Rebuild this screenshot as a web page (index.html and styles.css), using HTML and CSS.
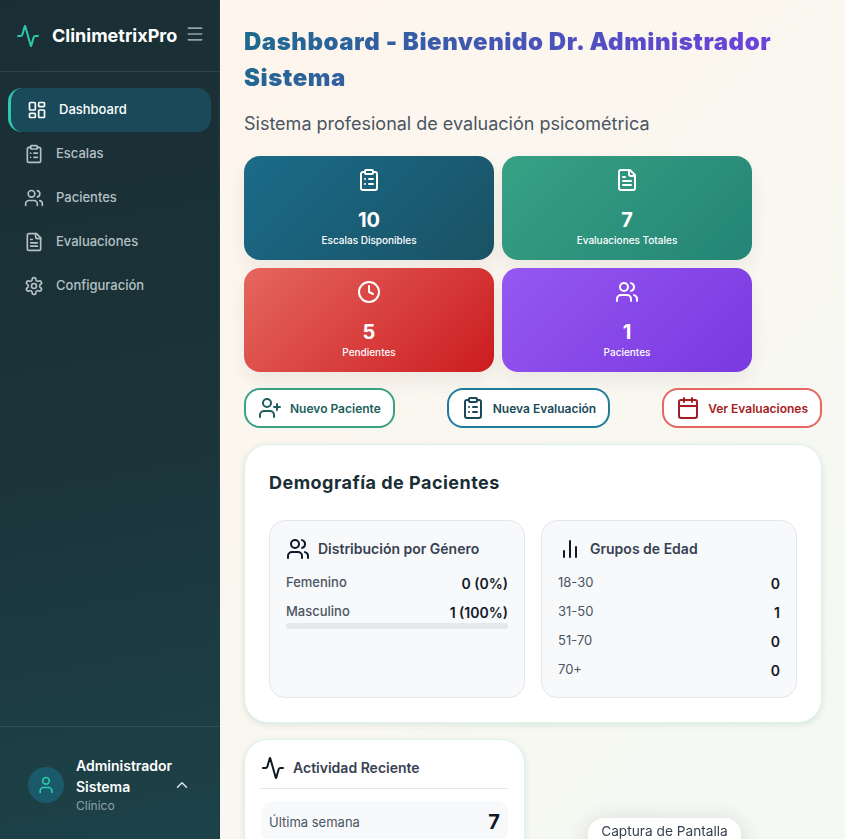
FILE: index.html
```html
<!DOCTYPE html>
<html lang="es">
<head>
	<meta charset="UTF-8">
	<title>ClinimetrixPro</title>
	<link rel="stylesheet" href="styles.css">
</head>
<body>
	<svg class="sprite" xmlns="http://www.w3.org/2000/svg">
		<symbol id="i-activity" viewBox="0 0 24 24"><path d="M22 12h-2.48a2 2 0 0 0-1.93 1.46l-2.35 8.36a.25.25 0 0 1-.48 0L9.24 2.18a.25.25 0 0 0-.48 0l-2.35 8.36A2 2 0 0 1 4.49 12H2"/></symbol>
		<symbol id="i-menu" viewBox="0 0 24 24"><path d="M4 5h16M4 12h16M4 19h16"/></symbol>
		<symbol id="i-dash" viewBox="0 0 24 24"><rect x="3" y="3" width="7" height="9" rx="1"/><rect x="14" y="3" width="7" height="5" rx="1"/><rect x="14" y="12" width="7" height="9" rx="1"/><rect x="3" y="16" width="7" height="5" rx="1"/></symbol>
		<symbol id="i-clipboard" viewBox="0 0 24 24"><rect x="8" y="2" width="8" height="4" rx="1"/><path d="M16 4h2a2 2 0 0 1 2 2v14a2 2 0 0 1-2 2H6a2 2 0 0 1-2-2V6a2 2 0 0 1 2-2h2M12 11h4M12 16h4M8 11h.01M8 16h.01"/></symbol>
		<symbol id="i-users" viewBox="0 0 24 24"><path d="M16 21v-2a4 4 0 0 0-4-4H6a4 4 0 0 0-4 4v2"/><circle cx="9" cy="7" r="4"/><path d="M22 21v-2a4 4 0 0 0-3-3.87M16 3.13a4 4 0 0 1 0 7.75"/></symbol>
		<symbol id="i-file" viewBox="0 0 24 24"><path d="M15 2H6a2 2 0 0 0-2 2v16a2 2 0 0 0 2 2h12a2 2 0 0 0 2-2V7Z"/><path d="M14 2v4a2 2 0 0 0 2 2h4M10 9H8M16 13H8M16 17H8"/></symbol>
		<symbol id="i-gear" viewBox="0 0 24 24"><path d="M12.22 2h-.44a2 2 0 0 0-2 2v.18a2 2 0 0 1-1 1.73l-.43.25a2 2 0 0 1-2 0l-.15-.08a2 2 0 0 0-2.73.73l-.22.38a2 2 0 0 0 .73 2.73l.15.1a2 2 0 0 1 1 1.72v.51a2 2 0 0 1-1 1.74l-.15.09a2 2 0 0 0-.73 2.73l.22.38a2 2 0 0 0 2.73.73l.15-.08a2 2 0 0 1 2 0l.43.25a2 2 0 0 1 1 1.73V20a2 2 0 0 0 2 2h.44a2 2 0 0 0 2-2v-.18a2 2 0 0 1 1-1.73l.43-.25a2 2 0 0 1 2 0l.15.08a2 2 0 0 0 2.73-.73l.22-.39a2 2 0 0 0-.73-2.73l-.15-.08a2 2 0 0 1-1-1.74v-.5a2 2 0 0 1 1-1.74l.15-.09a2 2 0 0 0 .73-2.73l-.22-.38a2 2 0 0 0-2.73-.73l-.15.08a2 2 0 0 1-2 0l-.43-.25a2 2 0 0 1-1-1.73V4a2 2 0 0 0-2-2z"/><circle cx="12" cy="12" r="3"/></symbol>
		<symbol id="i-clock" viewBox="0 0 24 24"><circle cx="12" cy="12" r="10"/><path d="M12 6v6l4 2"/></symbol>
		<symbol id="i-user-plus" viewBox="0 0 24 24"><path d="M16 21v-2a4 4 0 0 0-4-4H6a4 4 0 0 0-4 4v2"/><circle cx="9" cy="7" r="4"/><path d="M19 8v6M22 11h-6"/></symbol>
		<symbol id="i-calendar" viewBox="0 0 24 24"><path d="M8 2v4M16 2v4"/><rect x="3" y="4" width="18" height="18" rx="2"/><path d="M3 10h18"/></symbol>
		<symbol id="i-bars" viewBox="0 0 24 24"><path d="M6 20v-6M12 20V4M18 20v-10"/></symbol>
		<symbol id="i-user" viewBox="0 0 24 24"><path d="M19 21v-2a4 4 0 0 0-4-4H9a4 4 0 0 0-4 4v2"/><circle cx="12" cy="7" r="4"/></symbol>
		<symbol id="i-up" viewBox="0 0 24 24"><path d="m18 15-6-6-6 6"/></symbol>
	</svg>

	<div class="app">
		<aside class="sidebar">
			<div class="brand">
				<svg class="icon brand-logo"><use href="#i-activity"/></svg>
				<span class="brand-name">ClinimetrixPro</span>
				<svg class="icon brand-menu"><use href="#i-menu"/></svg>
			</div>
			<nav class="nav">
				<a class="nav-item active"><svg class="icon"><use href="#i-dash"/></svg>Dashboard</a>
				<a class="nav-item"><svg class="icon"><use href="#i-clipboard"/></svg>Escalas</a>
				<a class="nav-item"><svg class="icon"><use href="#i-users"/></svg>Pacientes</a>
				<a class="nav-item"><svg class="icon"><use href="#i-file"/></svg>Evaluaciones</a>
				<a class="nav-item"><svg class="icon"><use href="#i-gear"/></svg>Configuración</a>
			</nav>
			<div class="account">
				<div class="avatar"><svg class="icon"><use href="#i-user"/></svg></div>
				<div class="account-text">
					<div class="account-name">Administrador Sistema</div>
					<div class="account-role">Clínico</div>
				</div>
				<svg class="icon account-toggle"><use href="#i-up"/></svg>
			</div>
		</aside>

		<main class="main">
			<h1 class="page-title">Dashboard - Bienvenido Dr. Administrador Sistema</h1>
			<p class="page-sub">Sistema profesional de evaluación psicométrica</p>

			<div class="stats">
				<div class="stat stat-blue">
					<svg class="icon"><use href="#i-clipboard"/></svg>
					<div class="stat-num">10</div>
					<div class="stat-label">Escalas Disponibles</div>
				</div>
				<div class="stat stat-green">
					<svg class="icon"><use href="#i-file"/></svg>
					<div class="stat-num">7</div>
					<div class="stat-label">Evaluaciones Totales</div>
				</div>
				<div class="stat stat-red">
					<svg class="icon"><use href="#i-clock"/></svg>
					<div class="stat-num">5</div>
					<div class="stat-label">Pendientes</div>
				</div>
				<div class="stat stat-purple">
					<svg class="icon"><use href="#i-users"/></svg>
					<div class="stat-num">1</div>
					<div class="stat-label">Pacientes</div>
				</div>
			</div>

			<div class="actions">
				<button class="action action-green"><svg class="icon"><use href="#i-user-plus"/></svg>Nuevo Paciente</button>
				<button class="action action-blue"><svg class="icon"><use href="#i-clipboard"/></svg>Nueva Evaluación</button>
				<button class="action action-red"><svg class="icon"><use href="#i-calendar"/></svg>Ver Evaluaciones</button>
			</div>

			<section class="card demo">
				<h2 class="card-title">Demografía de Pacientes</h2>
				<div class="demo-grid">
					<div class="panel">
						<h3 class="panel-title"><svg class="icon"><use href="#i-users"/></svg>Distribución por Género</h3>
						<div class="row"><span>Femenino</span><b>0 (0%)</b></div>
						<div class="row"><span>Masculino</span><b>1 (100%)</b></div>
						<div class="bar"></div>
					</div>
					<div class="panel">
						<h3 class="panel-title"><svg class="icon"><use href="#i-bars"/></svg>Grupos de Edad</h3>
						<div class="row row-age"><span>18-30</span><b>0</b></div>
						<div class="row row-age"><span>31-50</span><b>1</b></div>
						<div class="row row-age"><span>51-70</span><b>0</b></div>
						<div class="row row-age"><span>70+</span><b>0</b></div>
					</div>
				</div>
			</section>

			<section class="card activity">
				<h3 class="activity-title"><svg class="icon"><use href="#i-activity"/></svg>Actividad Reciente</h3>
				<div class="activity-row"><span>Última semana</span><b>7</b></div>
			</section>
		</main>
	</div>

	<div class="capture-pill">Captura de Pantalla</div>
</body>
</html>
```

FILE: styles.css
```css
* {
	box-sizing: border-box;
}
html, body {
	height: 100%;
	margin: 0;
	overflow: hidden;
}
body {
	font-family: Inter, "Liberation Sans", sans-serif;
	color: #1f2937;
}
.sprite {
	display: none;
}
.icon {
	width: 24px;
	height: 24px;
	flex: none;
	fill: none;
	stroke: currentColor;
	stroke-width: 2;
	stroke-linecap: round;
	stroke-linejoin: round;
}
.app {
	display: flex;
	height: 100%;
}

/* sidebar */
.sidebar {
	display: flex;
	flex-direction: column;
	flex: none;
	width: 220px;
	background: linear-gradient(170deg, #1a2e35 0%, #1b3339 50%, #1d4249 100%);
	border-right: 1px solid #1d3a42;
}
.brand {
	display: flex;
	align-items: center;
	height: 72px;
	padding: 0 16px;
	border-bottom: 1px solid rgba(255, 255, 255, 0.1);
}
.brand-logo {
	color: #2dc9ad;
}
.brand-name {
	margin-left: 12px;
	color: #fff;
	font-size: 18px;
	font-weight: 700;
}
.brand-menu {
	width: 20px;
	height: 20px;
	margin-left: 8px;
	margin-top: -4px;
	color: #8fa3a8;
}
.nav {
	flex: 1;
	padding: 16px 8px;
}
.nav-item {
	display: flex;
	align-items: center;
	gap: 12px;
	height: 44px;
	padding: 0 16px 2px;
	border-radius: 14px;
	color: #b4c0c4;
	font-size: 13px;
	font-weight: 500;
}
.nav-item .icon {
	width: 20px;
	height: 20px;
	margin-top: 2px;
}
.nav-item.active {
	width: 203px;
	border-left: 3px solid #2dc9ad;
	background: #1a4a5a;
	color: #fff;
}
.account {
	display: flex;
	align-items: center;
	height: 113px;
	padding: 4px 28px 0;
	border-top: 1px solid rgba(255, 255, 255, 0.1);
}
.avatar {
	display: flex;
	align-items: center;
	justify-content: center;
	flex: none;
	width: 36px;
	height: 36px;
	border-radius: 50%;
	background: #1a5a6b;
	color: #2dc9ad;
}
.avatar .icon {
	width: 20px;
	height: 20px;
}
.account-text {
	width: 100px;
	margin-left: 12px;
}
.account-name {
	color: #fff;
	font-size: 14px;
	font-weight: 600;
	line-height: 21px;
}
.account-role {
	color: #8fa3a8;
	font-size: 12px;
	line-height: 18px;
}
.account-toggle {
	width: 18px;
	height: 18px;
	margin-left: -1px;
	color: #dfe6e8;
}

/* main */
.main {
	flex: 1;
	padding: 24px 23px 0 24px;
	overflow: hidden;
	background: linear-gradient(135deg, #fef5ec 0%, #f4f9f4 100%);
}
.page-title {
	margin: 0 0 14px;
	font-size: 24px;
	font-weight: 900;
	letter-spacing: 0.53px;
	line-height: 36px;
	background: linear-gradient(135deg, #1a6b8a 0%, #7c3aed 100%);
	-webkit-background-clip: text;
	background-clip: text;
	color: transparent;
}
.page-sub {
	margin: 0 0 19px;
	color: #4b5563;
	font-size: 18px;
	line-height: 27px;
}
.stats {
	display: grid;
	grid-template-columns: 250px 250px;
	gap: 8px;
	margin-bottom: 16px;
}
.stat {
	display: flex;
	flex-direction: column;
	align-items: center;
	height: 104px;
	padding-top: 12px;
	border-radius: 16px;
	color: #fff;
	box-shadow: 0 10px 20px rgba(0, 0, 0, 0.06);
}
.stat-blue {
	background: linear-gradient(135deg, #1a6b8a, #1a5264);
}
.stat-green {
	background: linear-gradient(135deg, #38a185, #238575);
}
.stat-red {
	background: linear-gradient(135deg, #e5675f, #cc1c20);
}
.stat-purple {
	background: linear-gradient(135deg, #9558f2, #7a38df);
}
.stat-num {
	margin-top: 14px;
	font-size: 20px;
	font-weight: 700;
	line-height: 28px;
}
.stat-label {
	margin-top: -1px;
	font-size: 10px;
	font-weight: 500;
	line-height: 14px;
}
.actions {
	display: flex;
	justify-content: space-between;
	margin-bottom: 16px;
}
.action {
	display: flex;
	align-items: center;
	gap: 8px;
	height: 40px;
	padding: 0 12px;
	border: 2px solid;
	border-radius: 16px;
	background: #fff;
	font-family: inherit;
	font-size: 12px;
	font-weight: 600;
}
.action-green {
	border-color: #38a185;
	color: #1c5f5c;
}
.action-blue {
	border-color: #1f7b9c;
	color: #1a4a5a;
}
.action-red {
	border-color: #e5675f;
	color: #a51c24;
}

/* cards */
.card {
	border: 1px solid #d9f2ea;
	border-radius: 24px;
	background: #fff;
	box-shadow: 0 2px 6px rgba(20, 100, 80, 0.12);
}
.demo {
	padding: 24px;
	margin-bottom: 16px;
}
.card-title {
	margin: 0 0 24px;
	color: #1a2e35;
	font-size: 18px;
	font-weight: 700;
	letter-spacing: 0.48px;
	line-height: 27px;
}
.demo-grid {
	display: grid;
	grid-template-columns: 1fr 1fr;
	gap: 16px;
}
.panel {
	height: 178px;
	padding: 16px;
	border: 1px solid #e5e7eb;
	border-radius: 16px;
	background: #f8f9fb;
}
.panel-title {
	display: flex;
	align-items: center;
	gap: 8px;
	margin: 0 0 12px;
	color: #374151;
	font-size: 14px;
	font-weight: 600;
	line-height: 24px;
}
.panel-title .icon,
.activity-title .icon {
	color: #111827;
}
.row {
	display: flex;
	justify-content: space-between;
	height: 29px;
	font-size: 13px;
	font-weight: 500;
	line-height: 18px;
	color: #4b5563;
}
.row b {
	margin-top: 2px;
	color: #111827;
	font-size: 14px;
	font-weight: 600;
}
.row-age {
	font-weight: 400;
}
.bar {
	height: 6px;
	margin-top: -8px;
	border-radius: 3px;
	background: #e5e7eb;
}
.activity {
	width: 281px;
	padding: 16px;
}
.activity-title {
	display: flex;
	align-items: center;
	gap: 8px;
	margin: 0 0 12px;
	padding-bottom: 8px;
	border-bottom: 1px solid #e5e7eb;
	color: #374151;
	font-size: 14px;
	font-weight: 600;
	line-height: 24px;
}
.activity-row {
	display: flex;
	align-items: center;
	justify-content: space-between;
	height: 42px;
	padding: 0 8px;
	border-radius: 12px;
	background: #f8f9fb;
	color: #4b5563;
	font-size: 13px;
}
.activity-row b {
	color: #111827;
	font-size: 20px;
	font-weight: 700;
}
.capture-pill {
	position: fixed;
	left: 588px;
	top: 818px;
	width: 153px;
	height: 40px;
	padding-top: 3px;
	border-radius: 16px;
	background: #fff;
	color: #374151;
	font-size: 13.7px;
	line-height: 20px;
	text-align: center;
	box-shadow: 0 4px 24px rgba(0, 0, 0, 0.15);
}
```
